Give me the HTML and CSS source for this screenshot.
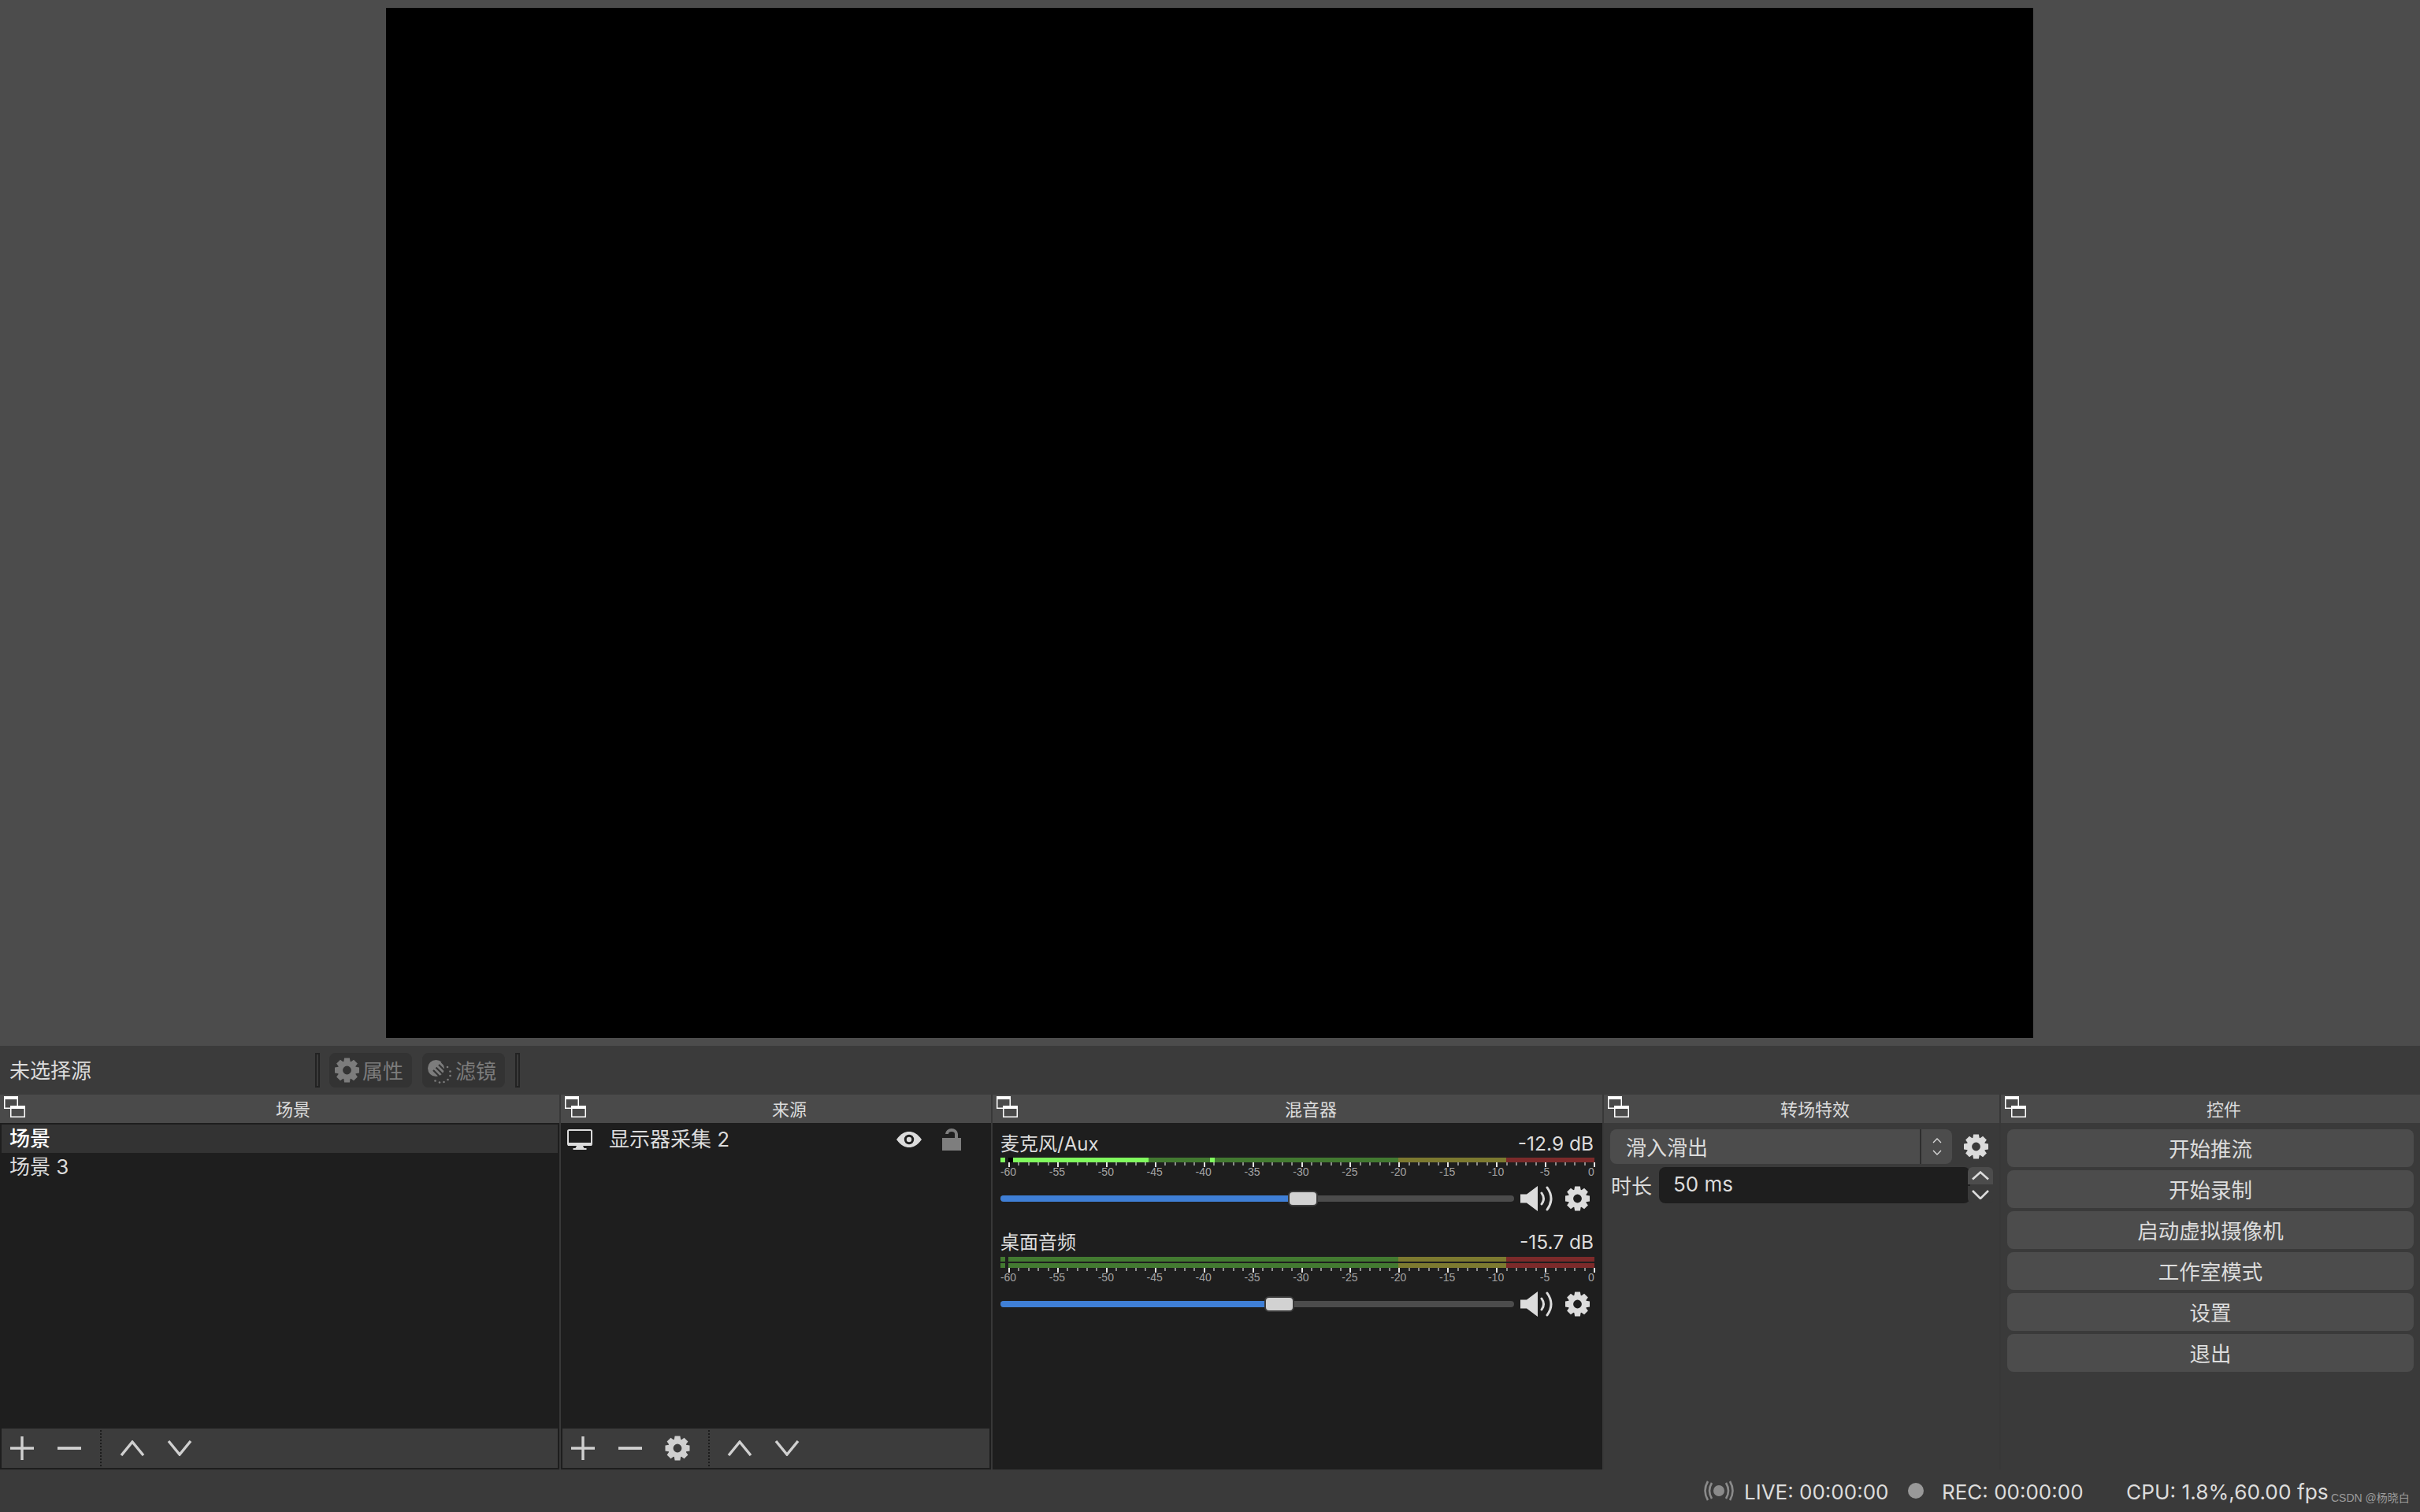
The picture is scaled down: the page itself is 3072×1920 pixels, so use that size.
FILE: index.html
```html
<!DOCTYPE html>
<html lang="zh-CN">
<head>
<meta charset="utf-8">
<title>OBS</title>
<link rel="stylesheet" href="styles.css">
</head>
<body>
<svg class="defs" width="0" height="0">
  <symbol id="gear" viewBox="0 0 32 32">
    <circle cx="16" cy="16" r="8.6" fill="none" stroke="currentColor" stroke-width="6.4"/>
    <g fill="currentColor">
      <path d="M12.6 0.5h6.8l1 6h-8.8z"/>
      <path d="M12.6 0.5h6.8l1 6h-8.8z" transform="rotate(45 16 16)"/>
      <path d="M12.6 0.5h6.8l1 6h-8.8z" transform="rotate(90 16 16)"/>
      <path d="M12.6 0.5h6.8l1 6h-8.8z" transform="rotate(135 16 16)"/>
      <path d="M12.6 0.5h6.8l1 6h-8.8z" transform="rotate(180 16 16)"/>
      <path d="M12.6 0.5h6.8l1 6h-8.8z" transform="rotate(225 16 16)"/>
      <path d="M12.6 0.5h6.8l1 6h-8.8z" transform="rotate(270 16 16)"/>
      <path d="M12.6 0.5h6.8l1 6h-8.8z" transform="rotate(315 16 16)"/>
    </g>
  </symbol>
  <symbol id="float" viewBox="0 0 27 27">
    <rect x="0.75" y="0.75" width="16.500" height="14.500" fill="none" stroke="#fff" stroke-width="1.5"/>
    <rect x="0" y="0" width="18" height="4" fill="#fff"/>
    <rect x="8.750" y="12.750" width="17.500" height="13.500" fill="#4a4a4a" stroke="#fff" stroke-width="1.5"/>
    <rect x="8" y="12" width="19" height="4" fill="#fff"/>
  </symbol>
  <symbol id="speaker" viewBox="0 0 44 32">
    <path d="M0 10.5h8L22 0v32L8 21.5H0z" fill="currentColor"/>
    <path d="M27 9q5 7 0 14M34 2q10 14 0 28" fill="none" stroke="currentColor" stroke-width="3" stroke-linecap="round"/>
  </symbol>
  <symbol id="plus" viewBox="0 0 32 32"><path d="M1 16h30M16 1v30" stroke="currentColor" stroke-width="3.4" fill="none"/></symbol>
  <symbol id="minus" viewBox="0 0 32 32"><path d="M1 16h30" stroke="currentColor" stroke-width="3.8" fill="none"/></symbol>
  <symbol id="up" viewBox="0 0 32 20"><path d="M2 19L16 2l14 17" stroke="currentColor" stroke-width="3.4" fill="none"/></symbol>
  <symbol id="down" viewBox="0 0 32 20"><path d="M2 1l14 17L30 1" stroke="currentColor" stroke-width="3.4" fill="none"/></symbol>
</svg>

<div class="app">
  <div class="preview"><div class="canvas"></div></div>

  <div class="source-bar">
    <div class="source-name">未选择源</div>
    <div class="grip"></div>
    <div class="src-btn">
      <svg class="src-gear"><use href="#gear"/></svg><span class="src-text">属性</span>
    </div>
    <div class="src-btn">
      <svg class="src-filter" viewBox="0 0 30 30">
        <circle cx="10.500" cy="10.500" r="10.500" fill="currentColor"/>
        <path d="M7 13l10 10M10.500 9.500l10 10M14 6l9 9M17.500 2.500l7 7" stroke="#333" stroke-width="2.200" fill="none"/>
        <g fill="currentColor">
          <circle cx="25" cy="9" r="1.300"/><circle cx="28.500" cy="14.500" r="1.300"/><circle cx="28.500" cy="20" r="1.300"/>
          <circle cx="25.500" cy="25" r="1.300"/><circle cx="20.500" cy="28" r="1.300"/><circle cx="15" cy="28.500" r="1.300"/><circle cx="9.500" cy="26.500" r="1.300"/>
        </g>
      </svg><span class="src-text">滤镜</span>
    </div>
    <div class="grip"></div>
  </div>

  <div class="docks">
    <section class="dock dock-scenes">
      <header class="dock-title"><svg class="float-icon"><use href="#float"/></svg>场景</header>
      <div class="dock-body dark">
        <ul class="list">
          <li class="row selected">场景</li>
          <li class="row">场景 3</li>
        </ul>
        <div class="tools">
          <svg class="tool"><use href="#plus"/></svg>
          <svg class="tool"><use href="#minus"/></svg>
          <i class="tool-sep"></i>
          <svg class="tool chevron"><use href="#up"/></svg>
          <svg class="tool chevron"><use href="#down"/></svg>
        </div>
      </div>
    </section>

    <section class="dock dock-sources">
      <header class="dock-title"><svg class="float-icon"><use href="#float"/></svg>来源</header>
      <div class="dock-body dark">
        <div class="source-item">
          <svg class="monitor" viewBox="0 0 32 26">
            <rect x="1" y="1" width="30" height="19" rx="1.5" fill="none" stroke="currentColor" stroke-width="2"/>
            <rect x="1" y="17" width="30" height="4" fill="currentColor"/>
            <path d="M12 21h8l1.500 3h3v2H7.500v-2h3z" fill="currentColor"/>
          </svg>
          <span class="source-label">显示器采集 2</span>
          <svg class="eye" viewBox="0 0 32 20">
            <path d="M0 10C6 2 11 0 16 0s10 2 16 10c-6 8-11 10-16 10S6 18 0 10z" fill="currentColor"/>
            <circle cx="16" cy="10" r="6.200" fill="#1e1e1e"/>
            <circle cx="16" cy="10" r="3.200" fill="currentColor"/>
          </svg>
          <svg class="lock" viewBox="0 0 24 28">
            <path d="M6 7A6 5 0 0 1 18 7V13" fill="none" stroke="currentColor" stroke-width="4"/>
            <rect y="12" width="24" height="16" fill="currentColor"/>
          </svg>
        </div>
        <div class="spacer"></div>
        <div class="tools">
          <svg class="tool"><use href="#plus"/></svg>
          <svg class="tool"><use href="#minus"/></svg>
          <svg class="tool"><use href="#gear"/></svg>
          <i class="tool-sep tight"></i>
          <svg class="tool chevron"><use href="#up"/></svg>
          <svg class="tool chevron"><use href="#down"/></svg>
        </div>
      </div>
    </section>

    <section class="dock dock-mixer">
      <header class="dock-title"><svg class="float-icon"><use href="#float"/></svg>混音器</header>
      <div class="dock-body dark mixer">
        <div class="strip">
          <div class="strip-head"><span class="strip-name">麦克风/Aux</span><span class="strip-db">-12.9 dB</span></div>
          <div class="meter">
            <i class="hi" style="width:6px"></i><i style="width:4px"></i><i class="peak" style="width:6px"></i><i class="hi" style="width:172px"></i><i class="lo" style="width:78px"></i><i class="hi" style="width:6px"></i><i class="lo" style="width:233px"></i><i class="mid" style="width:137px"></i><i class="red" style="width:112px"></i>
          </div>
          <div class="scale">
            <span>-60</span><span>-55</span><span>-50</span><span>-45</span><span>-40</span><span>-35</span><span>-30</span><span>-25</span><span>-20</span><span>-15</span><span>-10</span><span>-5</span><span class="zero">0</span>
          </div>
          <div class="fader">
            <div class="track"><div class="fill" style="width:365px"></div><div class="handle" style="left:365px"></div></div>
            <svg class="speaker"><use href="#speaker"/></svg>
            <svg class="strip-gear"><use href="#gear"/></svg>
          </div>
        </div>
        <div class="strip second">
          <div class="strip-head"><span class="strip-name">桌面音频</span><span class="strip-db">-15.7 dB</span></div>
          <div class="meter">
            <i class="lo" style="width:6px"></i><i style="width:4px"></i><i class="lo" style="width:495px"></i><i class="mid" style="width:137px"></i><i class="red" style="width:112px"></i>
          </div>
          <div class="meter stacked">
            <i class="lo" style="width:6px"></i><i style="width:4px"></i><i class="lo" style="width:495px"></i><i class="mid" style="width:137px"></i><i class="red" style="width:112px"></i>
          </div>
          <div class="scale">
            <span>-60</span><span>-55</span><span>-50</span><span>-45</span><span>-40</span><span>-35</span><span>-30</span><span>-25</span><span>-20</span><span>-15</span><span>-10</span><span>-5</span><span class="zero">0</span>
          </div>
          <div class="fader">
            <div class="track"><div class="fill" style="width:336px"></div><div class="handle" style="left:335px"></div></div>
            <svg class="speaker"><use href="#speaker"/></svg>
            <svg class="strip-gear"><use href="#gear"/></svg>
          </div>
        </div>
      </div>
    </section>

    <section class="dock dock-trans">
      <header class="dock-title"><svg class="float-icon"><use href="#float"/></svg>转场特效</header>
      <div class="dock-body trans">
        <div class="combo-row">
          <div class="combo">
            <span class="combo-text">滑入滑出</span>
            <span class="combo-arrows">
              <svg class="mini" viewBox="0 0 12 7"><path d="M1 6l5-5 5 5" fill="none" stroke="currentColor" stroke-width="1.300"/></svg>
              <svg class="mini" viewBox="0 0 12 7"><path d="M1 1l5 5 5-5" fill="none" stroke="currentColor" stroke-width="1.300"/></svg>
            </span>
          </div>
          <svg class="combo-gear"><use href="#gear"/></svg>
        </div>
        <div class="spin-row">
          <span class="spin-label">时长</span>
          <div class="spin-field">50 ms</div>
          <div class="spin-btns">
            <div class="spin-btn up"><svg viewBox="0 0 22 11"><path d="M1 10L11 1l10 9" fill="none" stroke="currentColor" stroke-width="2.600"/></svg></div>
            <div class="spin-btn dn"><svg viewBox="0 0 22 12"><path d="M1 1l10 10L21 1" fill="none" stroke="currentColor" stroke-width="2.600"/></svg></div>
          </div>
        </div>
      </div>
    </section>

    <section class="dock dock-ctrl">
      <header class="dock-title"><svg class="float-icon"><use href="#float"/></svg>控件</header>
      <div class="dock-body ctrl">
        <div class="btn">开始推流</div>
        <div class="btn">开始录制</div>
        <div class="btn">启动虚拟摄像机</div>
        <div class="btn">工作室模式</div>
        <div class="btn">设置</div>
        <div class="btn">退出</div>
      </div>
    </section>
  </div>

  <footer class="status">
    <svg class="live-icon" viewBox="0 0 38 26">
      <circle cx="19" cy="13" r="7" fill="currentColor"/>
      <path d="M10 3Q4 13 10 23M28 3q6 10 0 20M5 1Q-2 13 5 25M33 1q7 12 0 24" fill="none" stroke="currentColor" stroke-width="2.600"/>
    </svg>
    <span class="live-text">LIVE: 00:00:00</span>
    <i class="rec-dot"></i>
    <span class="rec-text">REC: 00:00:00</span>
    <span class="cpu-text">CPU: 1.8%,60.00 fps</span>
    <span class="mark">CSDN @杨晓白</span>
  </footer>
</div>
</body>
</html>
```
FILE: styles.css
```css
* { box-sizing: border-box; }
html, body { margin: 0; padding: 0; background: #3a3a3a; }
body {
  width: 3072px;
  height: 1920px;
  overflow: hidden;
  color: #dcdcdc;
  font-family: Inter, "Noto Sans CJK SC", sans-serif;
  font-size: 26px;
}
.defs { position: absolute; }
.app { width: 3072px; height: 1920px; display: flex; flex-direction: column; }

.preview { height: 1328px; padding: 10px 0 10px 490px; background: #4c4c4c; flex: none; }
.canvas { width: 2091px; height: 1308px; background: #000; }

.source-bar {
  height: 62px; flex: none; display: flex; align-items: center;
  background: #3b3b3b; padding-left: 12px;
}
.source-name { width: 388px; font-size: 26px; color: #dcdcdc; padding-bottom: 3px; }
.grip { width: 6px; height: 44px; border: 2px solid #222; background: #3b3b3b; flex: none; }
.src-btn {
  width: 105px; height: 44px; margin-left: 12px; background: #333; border-radius: 8px;
  display: flex; align-items: center; padding-left: 6px; color: #7c7c7c; font-size: 26px; flex: none;
}
.src-btn + .src-btn { margin-left: 13px; }
.src-btn + .grip { margin-left: 13px; }
.grip + .src-btn { margin-left: 12px; }
.src-text { padding-bottom: 2px; }
.src-gear { width: 33px; height: 32px; margin-right: 3px; flex: none; }
.src-filter { width: 30px; height: 30px; margin: 4px 5px 0 1px; flex: none; }

.docks { height: 476px; flex: none; display: flex; gap: 2px; background: #383838; }
.dock { display: flex; flex-direction: column; flex: none; }
.dock-scenes { width: 710px; }
.dock-sources { width: 546px; }
.dock-mixer { width: 774px; }
.dock-trans { width: 502px; }
.dock-ctrl { width: 532px; }

.dock-title {
  position: relative; height: 36px; flex: none; background: #4a4a4a;
  display: flex; align-items: center; justify-content: center;
  padding: 0 0 2px 34px; font-size: 22px; color: #dcdcdc;
}
.float-icon { position: absolute; left: 5px; top: 2px; width: 27px; height: 27px; }

.dock-body { flex: 1; display: flex; flex-direction: column; min-height: 0; }
.dark { background: #1e1e1e; }

.list { list-style: none; margin: 0; padding: 2px 2px 0; flex: 1; }
.row { height: 36px; line-height: 35px; padding-left: 10px; color: #dcdcdc; font-size: 26px; }
.selected { background: #333; color: #fff; font-weight: 500; }
.spacer { flex: 1; }

.tools {
  height: 50px; margin: 0 2px 2px; flex: none; background: #3c3c3c;
  display: flex; align-items: center; padding-left: 10px;
}
.tool { width: 32px; height: 32px; margin-right: 28px; flex: none; color: #d0d0d0; }
.chevron { height: 20px; }
.tool-sep { width: 0; height: 46px; border-left: 2px dotted #1c1c1c; margin: 0 23px 0 -5px; flex: none; }
.tool-sep.tight { margin: 0 22px 0 -5px; }

.source-item { height: 36px; margin-top: 3px; display: flex; align-items: center; padding-left: 8px; flex: none; }
.monitor { width: 32px; height: 26px; margin-right: 21px; flex: none; }
.source-label { width: 365px; flex: none; padding-bottom: 5px; font-size: 26px; }
.eye { width: 32px; height: 20px; margin-right: 26px; flex: none; }
.lock { width: 24px; height: 28px; color: #7e7e7e; flex: none; }

.mixer { padding: 9px 10px 0; }
.strip-head { height: 35px; display: flex; justify-content: space-between; align-items: center; font-size: 24px; }
.strip-name { padding-bottom: 4px; }
.strip-db { margin-right: 1px; padding-bottom: 2px; font-size: 24.500px; }
.meter { height: 6px; display: flex; flex: none; }
.meter i { display: block; height: 6px; flex: none; }
.meter.stacked { margin-top: 2px; }
.hi { background: #80fb5e; }
.lo { background: #437a31; }
.mid { background: #7d7a30; }
.red { background: #7c2a2a; }
.peak { background: #000; }

.scale {
  height: 30px; width: 783px; margin-left: -10px;
  display: flex; justify-content: space-between; padding-top: 5px;
  font: 14px/12px "Liberation Sans", sans-serif; color: #a2a2a2;
  background:
    repeating-linear-gradient(90deg, #e4e4e4 0 2px, transparent 2px 61.92px) 20px 0 / 745px 6px no-repeat,
    repeating-linear-gradient(90deg, #8c8c8c 0 2px, transparent 2px 12.384px) 20px 0 / 745px 4px no-repeat;
}
.scale span { width: 40px; text-align: center; display: block; padding-top: 1px; }
.scale .zero { text-align: left; padding-left: 13px; }

.fader { height: 32px; display: flex; align-items: center; }
.track { position: relative; width: 652px; height: 8px; border-radius: 4px; background: #4c4c4c; flex: none; }
.fill { height: 8px; background: #3f7fd6; border-radius: 4px 0 0 4px; }
.handle {
  position: absolute; top: -6px; width: 38px; height: 20px;
  background: #d2d2d2; border: 2px solid #3a3a3a; border-radius: 6px;
}
.speaker { width: 44px; height: 32px; margin-left: 8px; flex: none; }
.strip-gear { width: 33px; height: 32px; margin-left: 12px; flex: none; }
.second { margin-top: 22px; }
.second .strip-head { margin-bottom: 1px; }

.trans, .ctrl { background: #3a3a3a; padding: 8px; }
.combo-row { display: flex; align-items: center; height: 44px; flex: none; }
.combo {
  width: 434px; height: 44px; background: #4c4c4c; border-radius: 8px;
  display: flex; align-items: center; padding-left: 20px; flex: none;
}
.combo-text { width: 373px; flex: none; padding-bottom: 2px; }
.combo-arrows {
  width: 41px; height: 44px; border-left: 2px solid #2e2e2e;
  display: flex; flex-direction: column; align-items: center; justify-content: center; gap: 8px; flex: none;
}
.mini { width: 12px; height: 7px; display: block; }
.combo-gear { width: 33px; height: 32px; margin-left: 14px; flex: none; }

.spin-row { display: flex; align-items: center; height: 46px; margin-top: 4px; flex: none; }
.spin-label { width: 62px; padding: 0 0 2px 1px; flex: none; }
.spin-field {
  width: 395px; height: 46px; background: #1e1e1e; border-radius: 8px;
  padding-left: 18px; line-height: 44px; flex: none;
}
.spin-btns { width: 32px; height: 46px; margin-left: -3px; display: flex; flex-direction: column; gap: 2px; flex: none; }
.spin-btn { height: 22px; display: flex; align-items: center; justify-content: center; }
.spin-btn svg { width: 22px; height: 12px; }
.up { background: #4c4c4c; border-radius: 6px 6px 0 0; }
.dn { background: #3a3a3a; border-radius: 0 0 6px 6px; }

.ctrl { gap: 4px; }
.btn {
  height: 48px; flex: none; background: #4c4c4c; border-radius: 8px;
  display: flex; align-items: center; justify-content: center; font-size: 26.500px; padding-bottom: 2px;
}

.status {
  height: 54px; flex: 1; background: #3a3a3a; display: flex; align-items: center;
  padding-left: 2163px; font-size: 26px; color: #dcdcdc; white-space: nowrap;
}
.live-icon { width: 38px; height: 26px; color: #8a8a8a; flex: none; }
.live-text { margin-left: 13px; width: 182px; flex: none; padding-top: 2px; }
.rec-dot { width: 20px; height: 20px; border-radius: 50%; background: #999; margin-left: 26px; flex: none; }
.rec-text { margin-left: 23px; width: 178px; flex: none; padding-top: 2px; }
.cpu-text { margin-left: 56px; width: 260px; flex: none; padding-top: 2px; font-size: 26.300px; }
.mark { font: 14px "Liberation Sans", "Noto Sans CJK SC", sans-serif; color: #9c9c9c; margin-top: 16px; }
```
